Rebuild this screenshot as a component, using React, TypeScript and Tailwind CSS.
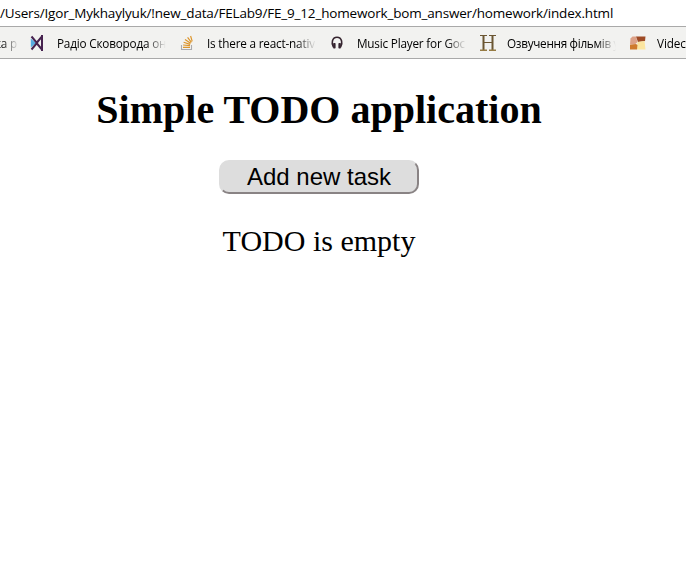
import type { ReactNode } from "react";

function RadioIcon() {
  return (
    <svg width="16" height="16" viewBox="0 0 16 16" fill="none">
      <path d="M.8 3.5 6 8 .8 12.5Z" fill="#58ace0" />
      <path d="M1.5 1.5 7 8l-5.5 6.5M11.5 2 6.5 8l5 6" stroke="#46224f" strokeWidth="2" />
      <path d="M12 0v16" stroke="#46224f" strokeWidth="2" />
    </svg>
  );
}

function StackIcon() {
  return (
    <svg width="16" height="16" viewBox="0 0 16 16" fill="none">
      <path d="M1.5 10v4.5h10V10" stroke="#aaaaad" strokeWidth="1.1" />
      <path d="M3 12.4h7M3.1 10l6.9.7M3.6 7.2l6.6 2.2M5 4.6l5.6 3.7M7.6 2.4l3.8 5M10.6 1l1.6 5.4" stroke="#dc952c" strokeWidth="1.2" />
    </svg>
  );
}

function HeadphonesIcon() {
  return (
    <svg width="16" height="16" viewBox="0 0 16 16" fill="none">
      <path d="M3.4 12C1.2 8.8 1.8 2.3 7 2.3s5.8 6.5 3.6 9.7" stroke="#35242f" strokeWidth="1.6" />
      <rect x="3.1" y="8" width="2.5" height="5.5" rx="0.8" fill="#35242f" />
      <rect x="8.4" y="8" width="2.5" height="5.5" rx="0.8" fill="#35242f" />
    </svg>
  );
}

function LetterHIcon() {
  return (
    <svg width="16" height="16" viewBox="0 0 16 16" fill="none">
      <path d="M3.5 1v14M12.5 1v14" stroke="#6b5632" strokeWidth="2" />
      <path d="M0 .5h7M9 .5h7M3.5 7.5h9" stroke="#6b5632" />
      <path d="M0 15.3h7M9 15.3h7" stroke="#967b43" strokeWidth="1.4" />
    </svg>
  );
}

function VideoIcon() {
  return (
    <svg width="16" height="16" viewBox="0 0 16 16">
      <path d="M.5 3.5 2.5 1.5H6L7.5 7 5 9.5H0Z" fill="#dda187" />
      <path d="M6 1.5h9.5L15 6 8 7Z" fill="#9e4a25" />
      <path d="m7.5 7 7-1 1 8.5H7Z" fill="#fbe5a0" />
      <path d="M0 9.8 6 9l1.5 1-.5 4.5H0Z" fill="#cf7a2d" />
    </svg>
  );
}

const bookmarks: { icon: ReactNode; label: string; text: string }[] = [
  { icon: <RadioIcon />, label: "Радіо Сковорода он", text: "tracking-[-0.2px]" },
  { icon: <StackIcon />, label: "Is there a react-nativ", text: "tracking-[-0.2px]" },
  { icon: <HeadphonesIcon />, label: "Music Player for Goc", text: "tracking-[-0.2px]" },
  { icon: <LetterHIcon />, label: "Озвучення фільмів у", text: "tracking-[-0.3px]" },
  { icon: <VideoIcon />, label: "Videc", text: "tracking-[-0.1px]" },
];

export default function App() {
  return (
    <div className="h-[577px] w-[686px] overflow-hidden bg-white text-black">
      <div className="flex h-[27px] items-center border-b border-[#a9a9a9] bg-white font-['Open_Sans','Noto_Sans',sans-serif]">
        <span className="whitespace-nowrap text-[13.5px] leading-[26px] tracking-[-0.175px]">
          /Users/Igor_Mykhaylyuk/!new_data/FELab9/FE_9_12_homework_bom_answer/homework/index.html
        </span>
      </div>
      <nav className="flex h-8 items-center border-b border-[#a9a9a9] bg-[#f2f2f0] pt-px font-['Open_Sans','Noto_Sans',sans-serif] text-[11.75px] leading-4">
        <span className="flex w-[30px] shrink-0">
          <span className="flex w-[17px] justify-end whitespace-nowrap bg-linear-to-r from-black from-10% to-transparent to-110% bg-clip-text tracking-[-0.2px] text-transparent">
            ка р
          </span>
        </span>
        {bookmarks.map((item) => (
          <span key={item.label} className="flex w-[150px] shrink-0 items-center gap-[11px]">
            <span className="shrink-0">{item.icon}</span>
            <span className={`w-[109px] whitespace-nowrap bg-linear-to-r from-black from-82% to-transparent bg-clip-text text-transparent ${item.text}`}>
              {item.label}
            </span>
          </span>
        ))}
      </nav>
      <main className="flex w-[638px] flex-col items-center font-['Liberation_Serif',serif]">
        <h1 className="mt-7 whitespace-nowrap text-[40px] font-bold leading-[46px]">Simple TODO application</h1>
        <button className="mt-[27px] flex h-[34px] w-[200px] items-center justify-center rounded-[10px] border-2 border-t-[#dddddd] border-l-[#dddddd] border-r-[#898384] border-b-[#898384] bg-[#dddddd] font-['Liberation_Sans',sans-serif] text-2xl leading-7">
          Add new task
        </button>
        <p className="mt-[30px] whitespace-nowrap text-[30px] leading-[34px]">TODO is empty</p>
      </main>
    </div>
  );
}
